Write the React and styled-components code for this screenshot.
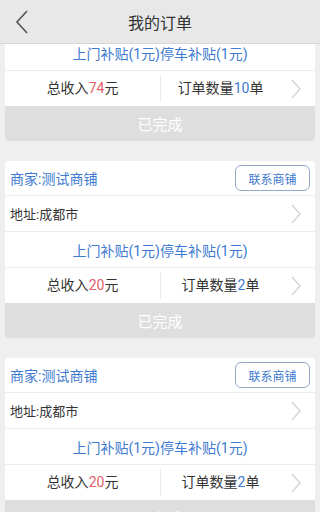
import styled, { createGlobalStyle } from "styled-components";

const GlobalStyle = createGlobalStyle`
  html, body {
    margin: 0;
    padding: 0;
    background: #efefef;
    font-family: Roboto, "Noto Sans CJK SC", sans-serif;
  }
  * { box-sizing: border-box; }
`;

const Page = styled.div`
  width: 320px;
  height: 512px;
  display: flex;
  flex-direction: column;
  background: #efefef;
  overflow: hidden;
`;

const Header = styled.div`
  flex: none;
  height: 44px;
  display: flex;
  align-items: center;
  justify-content: center;
  position: relative;
  background: #e8e8e8;
  border-bottom: 1px solid #d6d6d6;
  color: #333;
  font-size: 16px;
  z-index: 2;
`;

const Back = styled.svg`
  position: absolute;
  left: 14px;
  top: 10px;
`;

const Viewport = styled.div`
  flex: 1;
  overflow: hidden;
`;

const List = styled.div`
  display: flex;
  flex-direction: column;
  gap: 20px;
  padding: 0 5px;
  margin-top: -80px;
`;

const Card = styled.div`
  background: #fff;
  border-radius: 3px;
  overflow: hidden;
`;

const Row = styled.div`
  height: ${(p) => p.h || 36}px;
  display: flex;
  align-items: center;
  justify-content: ${(p) => (p.center ? "center" : "space-between")};
  padding: 0 ${(p) => (p.center ? 0 : 5)}px;
  border-bottom: 1px solid #ececec;
  font-size: 14px;
  color: ${(p) => p.color || "#333"};
`;

const Merchant = styled.span`
  color: #3d7ad0;
  font-size: 14px;
`;

const Contact = styled.button`
  width: 75px;
  height: 26px;
  border: 1px solid #93a9c9;
  border-radius: 6px;
  background: #fff;
  color: #3d7ad0;
  font-family: inherit;
  font-size: 12px;
  padding: 0;
`;

const Address = styled.span`
  font-size: 13px;
  color: #333;
`;

const Stats = styled.div`
  height: 35px;
  display: flex;
  align-items: center;
  font-size: 14px;
  color: #333;
`;

const Half = styled.div`
  flex: ${(p) => p.w}px 0 0;
  text-align: center;
  height: 27px;
  line-height: 27px;
  border-right: ${(p) => (p.divider ? "1px solid #ececec" : "none")};
`;

const Red = styled.span`
  color: #e2606a;
`;

const Blue = styled.span`
  color: #3d7ad0;
`;

const Done = styled.div`
  height: 35px;
  display: flex;
  align-items: center;
  justify-content: center;
  background: #dedede;
  color: #fff;
  font-size: 15px;
`;

const ChevronSlot = styled.div`
  flex: ${(p) => (p.grow ? 1 : "none")};
  display: flex;
  justify-content: flex-end;
  padding-right: ${(p) => p.pr}px;
`;

const Chevron = () => (
  <svg width="12" height="20" viewBox="0 0 12 20">
    <path d="M2 1 L10 10 L2 19" fill="none" stroke="#d2d2d2" strokeWidth="1.3" />
  </svg>
);

const Order = ({ income, count }) => (
  <Card>
    <Row h={35}>
      <Merchant>商家:测试商铺</Merchant>
      <Contact>联系商铺</Contact>
    </Row>
    <Row>
      <Address>地址:成都市</Address>
      <ChevronSlot pr={8}>
        <Chevron />
      </ChevronSlot>
    </Row>
    <Row center color="#3d7ad0">
      上门补贴(1元)停车补贴(1元)
    </Row>
    <Stats>
      <Half w={156} divider>
        总收入<Red>{income}</Red>元
      </Half>
      <Half w={119}>
        订单数量<Blue>{count}</Blue>单
      </Half>
      <ChevronSlot grow pr={13}>
        <Chevron />
      </ChevronSlot>
    </Stats>
    <Done>已完成</Done>
  </Card>
);

export default function App() {
  return (
    <Page>
      <GlobalStyle />
      <Header>
        <Back width="16" height="24" viewBox="0 0 16 24">
          <path d="M13 1 L3 12 L13 23" fill="none" stroke="#555" strokeWidth="1.6" />
        </Back>
        我的订单
      </Header>
      <Viewport>
        <List>
          <Order income="74" count="10" />
          <Order income="20" count="2" />
          <Order income="20" count="2" />
        </List>
      </Viewport>
    </Page>
  );
}
